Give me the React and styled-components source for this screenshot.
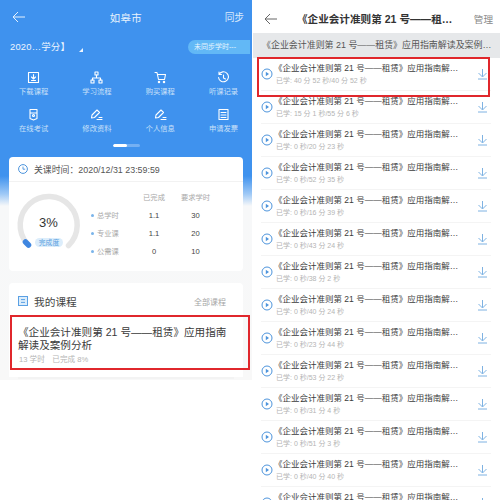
import React from "react";
import styled, { createGlobalStyle } from "styled-components";

const Global = createGlobalStyle`
  html, body { margin: 0; padding: 0; background: #fff; }
  body { width: 500px; height: 500px; overflow: hidden; font-family: "Liberation Sans", "Noto Sans CJK SC", sans-serif; }
  * { box-sizing: border-box; }
`;
const Page = styled.div`display: flex; width: 500px; height: 500px; overflow: hidden;`;
const Left = styled.div`
  width: 252px; height: 500px; flex: none; position: relative;
  background: linear-gradient(#3f92ee 0, #3f92ee 176px, #9fc9f6 194px, #f7f8f9 206px, #f8f8f8 380px, #fff 380px);
`;
const TopBar = styled.div`
  height: 34px; display: flex; align-items: center; justify-content: space-between; padding: 0 8px 0 12px; color: #e6f1fd;
`;
const TopTitle = styled.div`font-size: 10.4px; color: #e8f2fd; margin-left: 1px; letter-spacing: .4px;`;
const Sync = styled.div`font-size: 9.7px; color: #dcebfc;`;
const YearRow = styled.div`height: 24px; margin-top: 0; display: flex; align-items: center; justify-content: space-between; padding-left: 10px; position: relative;`;
const YearText = styled.div`font-size: 9.4px; color: #eef5fe; letter-spacing: .2px;`;
const Caret = styled.div`
  position: absolute; left: 79px; top: 14px; width: 0; height: 0;
  border-left: 4px solid transparent; border-bottom: 4px solid #eef5fe;
`;
const Pill = styled.div`
  width: 62px; height: 14px; margin-right: 2px; margin-top: 1px; border-radius: 8px 0 0 8px; background: #62b8f6; color: #e6f4fe;
  font-size: 7px; line-height: 14px; padding-left: 6px; white-space: nowrap;
`;
const IconGrid = styled.div`display: grid; grid-template-columns: repeat(4, 63.3px); grid-auto-rows: 36.5px; margin: 13px 0 0 2px;`;
const IconCell = styled.div`display: flex; flex-direction: column; align-items: center; gap: 3px; color: #fff;`;
const IconLabel = styled.div`font-size: 7.3px; line-height: 10px; color: #c9e0f9; white-space: nowrap;`;
const Dots = styled.div`width: 27px; height: 3px; border-radius: 2px; background: #75b0f3; margin: 0 auto 0; overflow: hidden;`;
const DotActive = styled.div`width: 14px; height: 3px; background: #fff; border-radius: 2px;`;
const InfoCard = styled.div`margin: 10px 9px 0; height: 114px; width: 234px; background: #fff; border-radius: 4px;`;
const CardHead = styled.div`height: 25px; display: flex; align-items: center; gap: 6px; padding-left: 9px; border-bottom: 1px solid #f2f2f2; font-size: 8.9px; color: #555;`;
const CardBody = styled.div`display: flex; height: 88px;`;
const Gauge = styled.div`position: relative; width: 74px; height: 88px; flex: none;`;
const Percent = styled.div`position: absolute; left: 0; width: 79px; text-align: center; top: 33px; font-size: 13px; color: #333;`;
const DoneTag = styled.div`position: absolute; left: 26px; top: 56px; width: 28px; height: 9px; border-radius: 5px; background: #dcedfb; color: #5a9fe0; font-size: 6.8px; line-height: 9px; text-align: center;`;
const StatTable = styled.div`display: grid; grid-template-columns: 42px 42px 41px; grid-auto-rows: 18px; margin: 6px 0 0 8px; align-items: center; font-size: 7.3px;`;
const StatHead = styled.div`color: #a9a9a9; text-align: center; white-space: nowrap;`;
const StatLabel = styled.div`color: #a9a9a9; display: flex; align-items: center; gap: 3px; white-space: nowrap;`;
const Bullet = styled.span`width: 3px; height: 3px; border-radius: 50%; background: #7ab4ea; flex: none;`;
const StatNum = styled.div`color: #444; text-align: center; font-size: 7.6px;`;
const CourseCard = styled.div`position: relative; margin: 12px 9px 0; width: 234px; height: 94px; background: #fff; border-radius: 4px 4px 0 0;`;
const CourseHead = styled.div`height: 36px; display: flex; align-items: center; padding: 0 17px 0 9px; gap: 6px;`;
const CourseTitle = styled.div`font-size: 10.7px; color: #444; flex: 1;`;
const AllLink = styled.div`font-size: 8px; color: #a5a5a5;`;
const CourseName = styled.div`padding: 0 8px 0 9px; margin-top: 7px; font-size: 10.6px; line-height: 13px; color: #3a3a3a;`;
const CourseMeta = styled.div`padding-left: 10px; margin-top: 3px; font-size: 7.6px; line-height: 10px; color: #b5b5b5;`;
const RedBox = styled.div`position: absolute; border: 2px solid #e0272c; pointer-events: none;`;
const LeftRed = styled(RedBox)`left: 10px; top: 315px; width: 240px; height: 55px;`;
const Faint = styled.div`margin: 0 auto; width: 216px; height: 2px; background: #f3f3f3;`;

const Right = styled.div`flex: 1; height: 500px; background: #fff; position: relative; overflow: hidden; margin-left: 1px;`;
const RBar = styled.div`height: 33px; display: flex; align-items: center; padding: 4px 7px 0 11px;`;
const RTitle = styled.div`font-size: 10.6px; font-weight: 700; color: #333; flex: 1; margin-left: 19px; white-space: nowrap;`;
const RManage = styled.div`font-size: 9.6px; color: #888;`;
const Section = styled.div`height: 25px; background: #e6e8ea; font-size: 8.95px; line-height: 25px; padding-left: 9px; color: #555; white-space: nowrap;`;
const Row = styled.div`height: 33px; margin: 0 9px 0 8px; display: flex; align-items: center; border-bottom: 1px solid #f4f4f4; position: relative;`;
const RowText = styled.div`flex: 1; margin-left: 1px;`;
const RowTitle = styled.div`font-size: 8.5px; line-height: 12px; color: #3c3c3c; white-space: nowrap;`;
const RowMeta = styled.div`font-size: 7px; line-height: 10px; color: #b4b4b4; margin-top: 2px; padding-left: 2px; white-space: nowrap;`;
const RightRed = styled(RedBox)`left: 4px; top: 57px; width: 233px; height: 40px;`;

const Play = () => (
  <svg width="12" height="12" viewBox="0 0 12 12" style={{flex:"none"}}>
    <circle cx="6" cy="6" r="5" fill="none" stroke="#4d94dc" strokeWidth="1"/>
    <path d="M4.8 3.8 L8 6 L4.8 8.2 Z" fill="#4d94dc"/>
  </svg>
);
const Down = () => (
  <svg width="11" height="12" viewBox="0 0 11 12" style={{flex:"none", marginRight: 3}}>
    <path d="M5.5 1 V8.5 M1.5 5 L5.5 9 L9.5 5 M1 11 H10" fill="none" stroke="#6fa9df" strokeWidth=".9"/>
  </svg>
);
const Back = ({c}) => (
  <svg width="14" height="12" viewBox="0 0 14 12"><path d="M13 6 H1.2 M6 1 L1 6 L6 11" fill="none" stroke={c} strokeWidth="1"/></svg>
);
const G = ({children}) => (
  <svg width="13" height="13" viewBox="0 0 13 13" fill="none" stroke="#fff" strokeWidth="1.1" strokeLinecap="round" strokeLinejoin="round">{children}</svg>
);
const icons = [
  ["下载课程", <G><rect x="1.5" y="1.5" width="10" height="10"/><path d="M6.5 3.5V8M4.5 6l2 2 2-2M4.5 9.5h4"/></G>],
  ["学习流程", <G><rect x="5" y="1" width="3" height="3"/><rect x="1" y="9" width="3" height="3"/><rect x="9" y="9" width="3" height="3"/><path d="M6.5 4v3M2.5 9V7h8v2"/></G>],
  ["购买课程", <G><path d="M1 1.5h2l1.5 7h6l1-5H3.5"/><circle cx="5" cy="11" r=".7"/><circle cx="10" cy="11" r=".7"/></G>],
  ["听课记录", <G><path d="M2 3.5A5 5 0 1 1 1.5 6.5M2 1v2.5h2.5M6.5 4v3l2 1"/></G>],
  ["在线考试", <G><path d="M3 1.5h7M3 1.5v9l3.5 1.5 3.5-1.5v-9M3 5h7"/><circle cx="6.5" cy="7.5" r="1"/></G>],
  ["修改资料", <G><path d="M1.5 10l.5-3 5-5 2.5 2.5-5 5zM7 11.5h5M9 9.5h3"/></G>],
  ["个人信息", <G><path d="M1.5 10l.5-3 5-5 2.5 2.5-5 5zM7 11.5h5M9 9.5h3"/></G>],
  ["申请发票", <G><path d="M2 1.5h9v10H2zM4 4.5h5M4 7h5M4 9.5h5"/></G>],
];
const rows = ["40 分 52 秒/40 分 52 秒","15 分 1 秒/55 分 6 秒","0 秒/20 分 23 秒","0 秒/52 分 35 秒","0 秒/16 分 39 秒","0 秒/43 分 24 秒","0 秒/38 分 2 秒","0 秒/40 分 24 秒","0 秒/23 分 44 秒","0 秒/53 分 22 秒","0 秒/31 分 4 秒","0 秒/51 分 3 秒","0 秒/40 分 40 秒","0 秒/40 分 40 秒"];
const stats = [["总学时","1.1","30"],["专业课","1.1","20"],["公需课","0","10"]];

export default function App() {
  return (
    <Page>
      <Global/>
      <Left>
        <TopBar><Back c="#e6f1fd"/><TopTitle>如皋市</TopTitle><Sync>同步</Sync></TopBar>
        <YearRow><YearText>2020…学分】</YearText><Caret/><Pill>未同步学时---</Pill></YearRow>
        <IconGrid>{icons.map(([t,i]) => <IconCell key={t}>{i}<IconLabel>{t}</IconLabel></IconCell>)}</IconGrid>
        <Dots><DotActive/></Dots>
        <InfoCard>
          <CardHead>
            <svg width="10" height="10" viewBox="0 0 10 10"><circle cx="5" cy="5" r="4.4" fill="none" stroke="#4d94dc"/><path d="M5 2.6V5.2H7.2" fill="none" stroke="#4d94dc" strokeWidth=".9"/></svg>
            <span>关课时间：2020/12/31 23:59:59</span>
          </CardHead>
          <CardBody>
            <Gauge>
              <svg width="80" height="88" viewBox="0 0 80 88" style={{position:"absolute",left:0,top:0}}>
                <path d="M18 61.5 A28.5 28.5 0 1 1 59.5 63.5" fill="none" stroke="#e6e6e6" strokeWidth="5.5" strokeLinecap="round"/>
                <path d="M16.5 60 L19.5 63" fill="none" stroke="#3f86e0" strokeWidth="5.5" strokeLinecap="round"/>
              </svg>
              <Percent>3%</Percent>
              <DoneTag>完成度</DoneTag>
            </Gauge>
            <StatTable>
              <span/><StatHead>已完成</StatHead><StatHead>要求学时</StatHead>
              {stats.map(([a,b,c]) => (
                <React.Fragment key={a}>
                  <StatLabel><Bullet/>{a}</StatLabel><StatNum>{b}</StatNum><StatNum>{c}</StatNum>
                </React.Fragment>
              ))}
            </StatTable>
          </CardBody>
        </InfoCard>
        <CourseCard>
          <CourseHead>
            <svg width="10" height="10" viewBox="0 0 10 10"><rect x=".5" y=".5" width="9" height="9" fill="#dcedfb" stroke="#5aa0e4"/><path d="M3 3.6H7M3 6.4H7" stroke="#5aa0e4"/></svg>
            <CourseTitle>我的课程</CourseTitle>
            <AllLink>全部课程</AllLink>
          </CourseHead>
          <CourseName>《企业会计准则第 21 号——租赁》应用指南解读及案例分析</CourseName>
          <CourseMeta>13 学时　已完成 8%</CourseMeta>
        </CourseCard>
        <Faint/>
        <LeftRed/>
      </Left>
      <Right>
        <RBar><Back c="#666"/><RTitle>《企业会计准则第 21 号——租…</RTitle><RManage>管理</RManage></RBar>
        <Section>《企业会计准则第 21 号——租赁》应用指南解读及案例…</Section>
        {rows.map((m,i) => (
          <Row key={i}>
            <Play/>
            <RowText>
              <RowTitle>《企业会计准则第 21 号——租赁》应用指南解…</RowTitle>
              <RowMeta>已学: {m}</RowMeta>
            </RowText>
            <Down/>
          </Row>
        ))}
        <RightRed/>
      </Right>
    </Page>
  );
}
